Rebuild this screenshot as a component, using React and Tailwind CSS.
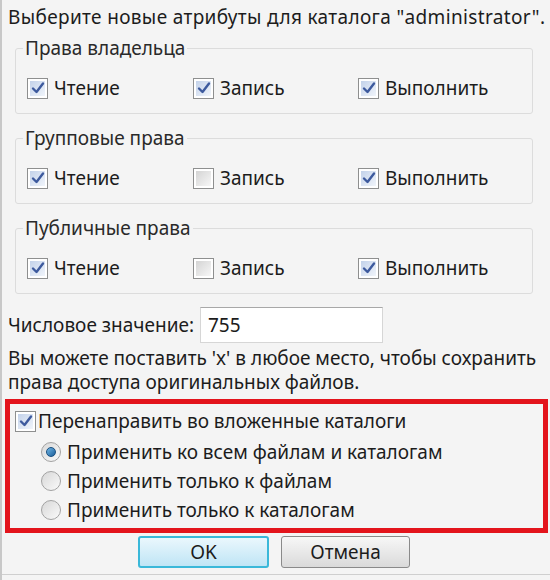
import React from 'react';

const font = { fontFamily: '"Noto Sans", "Open Sans", sans-serif' };

const Check = ({ checked }) => (
  <span className="w-[21px] h-[21px] shrink-0 border border-[#8e8f8f] bg-white p-[2px] flex">
    <span
      className={
        checked
          ? 'flex-1 bg-gradient-to-br from-[#c3d2ea] to-[#f1f5fb] flex items-center justify-center'
          : 'flex-1 bg-gradient-to-br from-[#d4d4d4] to-[#f7f7f7]'
      }
    >
      {checked && (
        <svg width="14" height="14" viewBox="0 0 14 14">
          <path d="M2 7.5 L5.5 11 L12 2.5" fill="none" stroke="#3d5a9e" strokeWidth="2.4" strokeLinecap="round" strokeLinejoin="round" />
        </svg>
      )}
    </span>
  </span>
);

const Radio = ({ checked }) => (
  <span className="w-[20px] h-[20px] shrink-0 rounded-full border border-[#a2a2a2] bg-gradient-to-br from-[#d8d8d8] to-[#fafafa] flex items-center justify-center">
    {checked && (
      <span className="w-[10px] h-[10px] rounded-full bg-gradient-to-br from-[#6fb7e6] to-[#1b5f9a] border border-[#1a5080]" />
    )}
  </span>
);

const Group = ({ title, values, first }) => (
  <fieldset className={`ml-[13px] mr-[17px] border border-[#dcdcdc] rounded-[3px] px-[7px] ${first ? 'mt-[9px]' : 'mt-[13px]'}`}>
    <legend className="px-[2px] leading-[22px] text-[#2a2a2a]">{title}</legend>
    <div className="flex h-[22px] mt-[18px] mb-[14px] pl-[4px]">
      {[
        ['Чтение', values[0]],
        ['Запись', values[1]],
        ['Выполнить', values[2]],
      ].map(([label, on], i) => (
        <label key={label} className={`flex items-center ${i === 0 ? 'w-[166px]' : i === 1 ? 'w-[165px]' : ''}`}>
          <Check checked={on} />
          <span className="ml-[6px] leading-[22px]">{label}</span>
        </label>
      ))}
    </div>
  </fieldset>
);

export default function App() {
  return (
    <div className="w-[550px] h-[580px] bg-[#f4f4f4] border-l-2 border-[#c8c8c8] text-[19px] text-[#1c1c1c] overflow-hidden" style={font}>
      <p className="pt-[6px] pl-[6px] leading-[22px] whitespace-nowrap tracking-[0.35px]">
        Выберите новые атрибуты для каталога "administrator".
      </p>

      <Group first title="Права владельца" values={[true, true, true]} />
      <Group title="Групповые права" values={[true, false, true]} />
      <Group title="Публичные права" values={[true, false, true]} />

      <div className="flex items-center mt-[13px] pl-[6px]">
        <span className="w-[192px] leading-[22px] whitespace-nowrap">Числовое значение:</span>
        <div className="w-[183px] h-[36px] bg-white border border-[#d6d6d6] border-t-[#a8a8a8] flex items-center px-[7px]">
          755
        </div>
      </div>

      <p className="pl-[6px] mt-[3px] leading-[24px] whitespace-nowrap">
        Вы можете поставить 'x' в любое место, чтобы сохранить
        <br />
        права доступа оригинальных файлов.
      </p>

      <div className="ml-[3px] mr-[2px] mt-[5px] h-[134px] border-[5px] border-[#e3141c] pt-[6px]">
        <label className="flex items-center pl-[5px] h-[22px]">
          <Check checked />
          <span className="ml-[2px] leading-[22px] whitespace-nowrap">Перенаправить во вложенные каталоги</span>
        </label>
        <div className="flex flex-col mt-[9px] pl-[31px] gap-[7px]">
          {[
            ['Применить ко всем файлам и каталогам', true],
            ['Применить только к файлам', false],
            ['Применить только к каталогам', false],
          ].map(([label, on]) => (
            <label key={label} className="flex items-center h-[22px]">
              <Radio checked={on} />
              <span className="ml-[6px] leading-[22px] whitespace-nowrap">{label}</span>
            </label>
          ))}
        </div>
      </div>

      <div className="flex mt-[3px] pl-[136px] gap-[12px]">
        <button className="w-[131px] h-[32px] rounded-[3px] border-2 border-[#3ab8d9] bg-gradient-to-b from-[#eaf7fd] to-[#bfe5f5] leading-[22px]">
          OK
        </button>
        <button className="w-[129px] h-[32px] rounded-[3px] border border-[#8a8a8a] bg-gradient-to-b from-[#f7f7f7] to-[#dadada] leading-[22px]">
          Отмена
        </button>
      </div>
      <div className="mt-[6px] border-t border-[#cfcfcf]" />
    </div>
  );
}
